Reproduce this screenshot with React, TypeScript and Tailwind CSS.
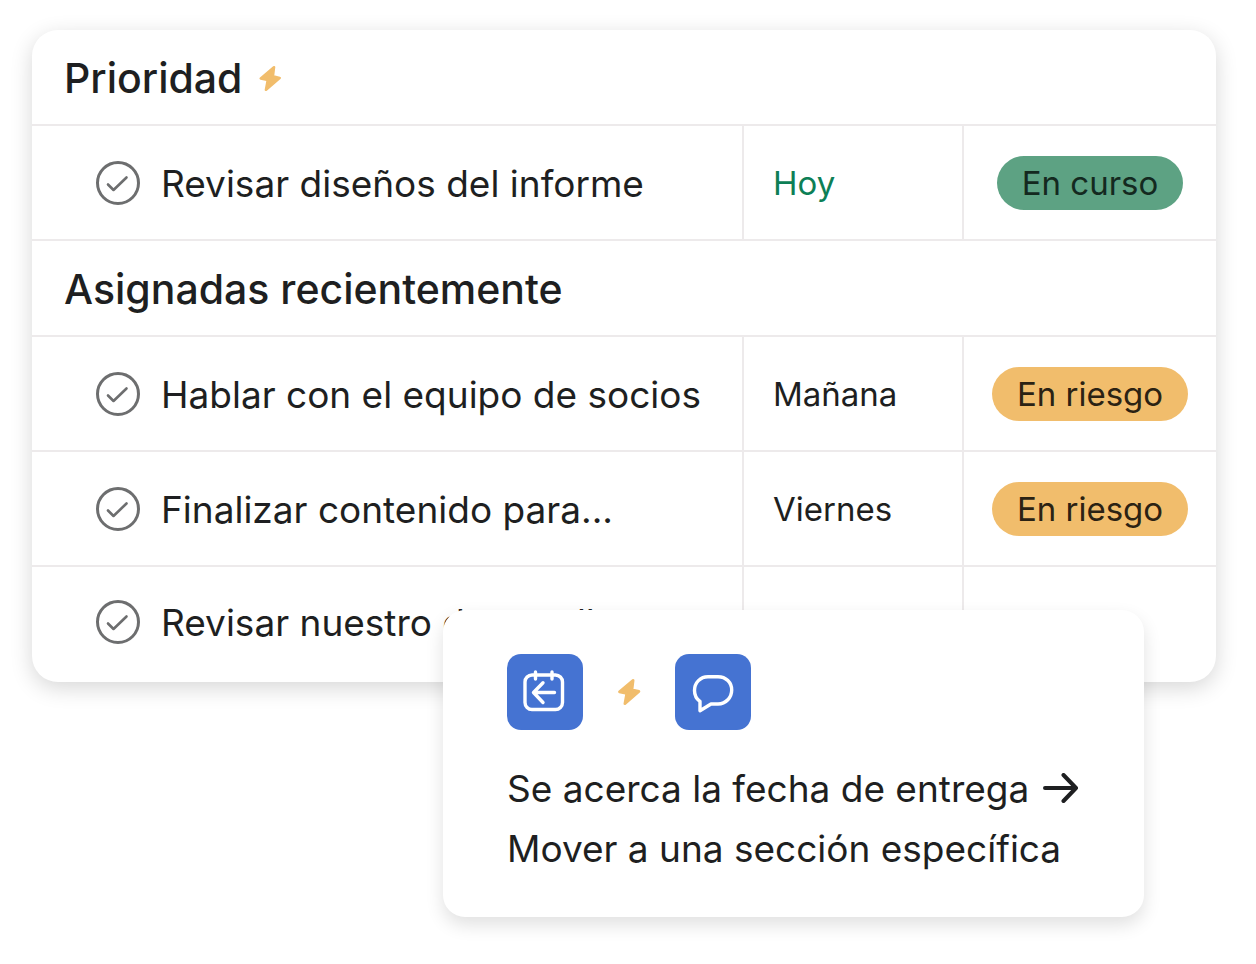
import React from 'react';

interface Task {
    id: string;
    title: string;
    due?: string;
    dueToday?: boolean;
    status?: 'onTrack' | 'atRisk';
}

interface Section {
    title: string;
    automated?: boolean;
    tasks: Task[];
}

const SECTIONS: Section[] = [
    {
        title: 'Prioridad',
        automated: true,
        tasks: [
            { id: 'informe', title: 'Revisar diseños del informe', due: 'Hoy', dueToday: true, status: 'onTrack' },
        ],
    },
    {
        title: 'Asignadas recientemente',
        tasks: [
            { id: 'socios', title: 'Hablar con el equipo de socios', due: 'Mañana', status: 'atRisk' },
            { id: 'contenido', title: 'Finalizar contenido para...', due: 'Viernes', status: 'atRisk' },
            { id: 'desarrollo', title: 'Revisar nuestro desarrollo' },
        ],
    },
];

const STATUS = {
    onTrack: { label: 'En curso', className: 'bg-[#5da283] text-[#14291f]' },
    atRisk: { label: 'En riesgo', className: 'bg-[#f1bd6c] text-[#2b2213]' },
};

const Bolt: React.FC<{ className: string }> = ({ className }) => (
    <svg className={className} viewBox="0 0 22 27" fill="#f1bd6c" stroke="#f1bd6c" strokeWidth="2.6" strokeLinejoin="round" aria-hidden="true">
        <path d="M15 2.2 1.8 13.4 8.8 14.9 7 24.8 20.6 12.9 13.9 11.3z" />
    </svg>
);

const TaskCheckbox: React.FC<{ id: string }> = ({ id }) => (
    <span className="grid shrink-0 place-items-center">
        <input id={id} type="checkbox" className="col-start-1 row-start-1 size-11 cursor-pointer appearance-none rounded-full border-[3px] border-[#6d6e6f]" />
        <svg className="pointer-events-none col-start-1 row-start-1 size-11" viewBox="0 0 44 44" fill="none" stroke="#6d6e6f" strokeWidth="2.6" strokeLinecap="round" strokeLinejoin="round" aria-hidden="true">
            <path d="M12 23.5 17.5 29 30.5 16.5" />
        </svg>
    </span>
);

const TaskRow: React.FC<{ task: Task; isLast: boolean }> = ({ task, isLast }) => {
    const line = isLast ? 'border-b-transparent pb-1' : 'border-b-[#edeaeb]';
    const status = task.status && STATUS[task.status];
    return (
        <tr className="h-[115px]">
            <td className={`border-b-2 pl-16 ${line}`}>
                <div className="flex items-center gap-[21px]">
                    <TaskCheckbox id={task.id} />
                    <label htmlFor={task.id} className="cursor-pointer pt-0.5 text-[37px] leading-12 whitespace-nowrap">{task.title}</label>
                </div>
            </td>
            <td className={`border-b-2 border-l-2 border-l-[#edeaeb] pl-[29px] text-[33px] leading-12 ${line} ${task.dueToday ? 'text-[#0d7f56]' : ''}`}>
                {task.due}
            </td>
            <td className={`border-b-2 border-l-2 border-l-[#edeaeb] text-center ${line}`}>
                {status && (
                    <span className={`inline-block rounded-full px-[25px] py-[3px] align-middle text-[33px] leading-12 whitespace-nowrap ${status.className}`}>
                        {status.label}
                    </span>
                )}
            </td>
        </tr>
    );
};

const TaskTable: React.FC = () => (
    <section className="overflow-hidden rounded-[26px] bg-white shadow-[0_6px_22px_rgba(0,0,0,0.16)]">
        <table className="w-full table-fixed border-separate border-spacing-0">
            <colgroup>
                <col />
                <col className="w-[220px]" />
                <col className="w-[254px]" />
            </colgroup>
            {SECTIONS.map((section, s) => (
                <tbody key={section.title}>
                    <tr className="h-24">
                        <th colSpan={3} scope="colgroup" className="border-b-2 border-[#edeaeb] pt-0.5 pl-8 text-left font-medium">
                            <div className="flex items-center gap-[17px]">
                                <h2 className="text-[41px] leading-12">{section.title}</h2>
                                {section.automated && <Bolt className="h-[27px] w-[22px]" />}
                            </div>
                        </th>
                    </tr>
                    {section.tasks.map((task, i) => (
                        <TaskRow key={task.id} task={task} isLast={s === SECTIONS.length - 1 && i === section.tasks.length - 1} />
                    ))}
                </tbody>
            ))}
        </table>
    </section>
);

const RuleCard: React.FC = () => (
    <section className="relative z-10 mr-[72px] -mt-[72px] ml-auto w-[701px] max-w-full rounded-[22px] bg-white px-16 pt-11 pb-[38px] shadow-[0_8px_18px_rgba(0,0,0,0.12)]">
        <div className="flex items-center">
            <span className="grid size-[76px] place-items-center rounded-[14px] bg-[#4573d2]">
                <svg className="size-[76px]" viewBox="0 0 76 76" fill="none" stroke="#fff" strokeWidth="3.4" strokeLinecap="round" strokeLinejoin="round" aria-hidden="true">
                    <rect x="18" y="21" width="37.5" height="34.5" rx="7" />
                    <path d="M28.5 18v7M45 18v7M47.5 38.5H27M36 28.8 26.5 38.5 36 48.5" />
                </svg>
            </span>
            <Bolt className="mx-[34px] h-7 w-6" />
            <span className="grid size-[76px] place-items-center rounded-[14px] bg-[#4573d2]">
                <svg className="size-[76px]" viewBox="0 0 76 76" fill="none" stroke="#fff" strokeWidth="3.4" strokeLinecap="round" strokeLinejoin="round" aria-hidden="true">
                    <path d="M33 22.7H43C51 22.7 56.7 28.6 56.7 36S51 50 43 50H36L25 56.7V47.5C21.5 45 19.5 41 19.5 36.5 19.5 28.6 25.5 22.7 33 22.7z" />
                </svg>
            </span>
        </div>
        <p className="mt-[29px] text-[37px] leading-[60px]">
            <span className="flex items-center gap-3.5 whitespace-nowrap">
                Se acerca la fecha de entrega
                <svg className="h-8 w-9 shrink-0" viewBox="0 0 36 32" fill="none" stroke="currentColor" strokeWidth="4" strokeLinecap="round" strokeLinejoin="round" aria-hidden="true">
                    <path d="M2 15H33M20.5 2 33 15 20.5 28" />
                </svg>
            </span>
            Mover a una sección específica
        </p>
    </section>
);

export default function App() {
    return (
        <main className="min-h-screen bg-white pt-[30px] pr-10 pb-11 pl-8 font-['Inter','Liberation_Sans',sans-serif] text-[#1e1f21]">
            <TaskTable />
            <RuleCard />
        </main>
    );
}
